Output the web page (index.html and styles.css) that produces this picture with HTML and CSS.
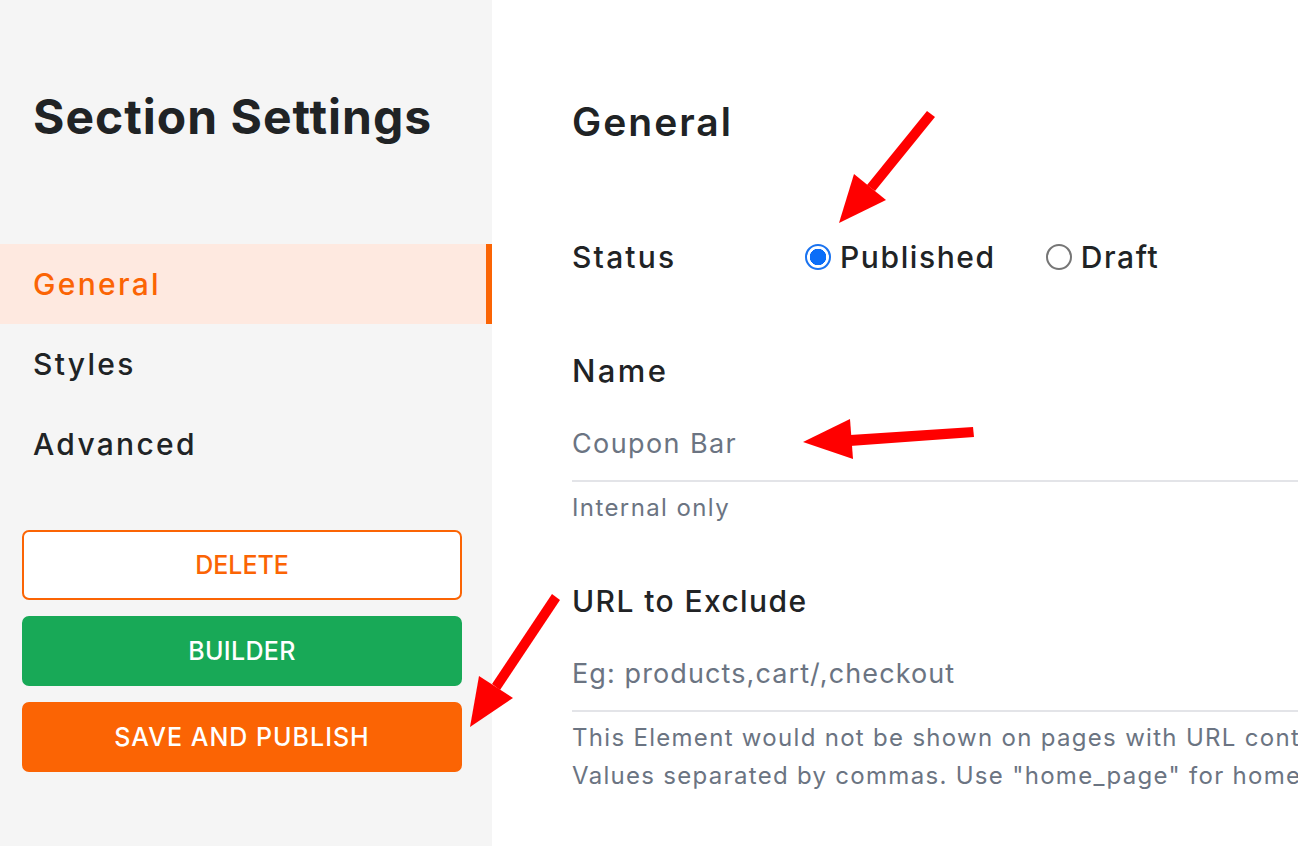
FILE: index.html
```html
<!DOCTYPE html>
<html>
<head>
<meta charset="utf-8">
<link rel="stylesheet" href="styles.css">
</head>
<body>
<div class="page">
  <aside class="sidebar">
    <h1 class="side-title">Section Settings</h1>
    <nav class="nav">
      <div class="nav-item active">General</div>
      <div class="nav-item">Styles</div>
      <div class="nav-item">Advanced</div>
    </nav>
    <div class="actions">
      <button class="btn btn-delete">DELETE</button>
      <button class="btn btn-builder">BUILDER</button>
      <button class="btn btn-save">SAVE AND PUBLISH</button>
    </div>
  </aside>
  <main class="main">
    <h2 class="main-title">General</h2>
    <div class="status-row">
      <div class="status-label">Status</div>
      <div class="radio-group">
        <span class="radio checked"></span><span class="radio-text published">Published</span>
        <span class="radio unchecked"></span><span class="radio-text">Draft</span>
      </div>
    </div>
    <div class="field-label name-label">Name</div>
    <div class="input value">Coupon Bar</div>
    <div class="hint">Internal only</div>
    <div class="field-label url-label">URL to Exclude</div>
    <div class="input placeholder">Eg: products,cart/,checkout</div>
    <div class="help">
      <div class="help-line">This Element would not be shown on pages with URL containing any of these values.</div>
      <div class="help-line">Values separated by commas. Use "home_page" for home page.</div>
    </div>
  </main>
  <svg class="annotations" width="1298" height="846" viewBox="0 0 1298 846">
    <polygon fill="#ff0000" points="927,111 935,117 875,191 867,185"/>
    <polygon fill="#ff0000" points="839,223 854,174 886,200"/>
    <polygon fill="#ff0000" points="850,435 973,427 974,437 850,446"/>
    <polygon fill="#ff0000" points="803,442 850,419 853,459"/>
    <polygon fill="#ff0000" points="552,594 560,600 500,690 492,684"/>
    <polygon fill="#ff0000" points="470,727 479,676 513,698"/>
  </svg>
</div>
</body>
</html>
```
FILE: styles.css
```css
html, body {
  margin: 0;
  padding: 0;
}
body {
  font-family: Inter, "Noto Sans", "Liberation Sans", sans-serif;
  color: #212325;
  background: #ffffff;
  overflow: hidden;
}
.page {
  position: relative;
  display: flex;
  width: 1298px;
  height: 846px;
  overflow: hidden;
}
.sidebar {
  flex: 0 0 492px;
  width: 492px;
  height: 846px;
  background: #f5f5f5;
  display: flex;
  flex-direction: column;
}
.side-title {
  margin: 0;
  padding: 88px 0 0 33px;
  font-size: 48px;
  line-height: 58px;
  font-weight: 700;
  letter-spacing: 1px;
  color: #202325;
  white-space: nowrap;
}
.nav {
  margin-top: 98px;
  display: flex;
  flex-direction: column;
}
.nav-item {
  height: 80px;
  line-height: 80px;
  padding-left: 33px;
  font-size: 30px;
  font-weight: 500;
  letter-spacing: 2.3px;
  color: #202325;
}
.nav-item.active {
  background: #fee9e0;
  color: #fb6404;
  border-right: 6px solid #fb6404;
}
.actions {
  margin-top: 46px;
  padding: 0 30px 0 22px;
  display: flex;
  flex-direction: column;
  gap: 16px;
}
.btn {
  display: block;
  width: 440px;
  height: 70px;
  border-radius: 7px;
  border: 2px solid transparent;
  font-family: inherit;
  font-size: 25px;
  font-weight: 500;
  letter-spacing: 0.3px;
  cursor: pointer;
}
.btn-delete {
  background: #ffffff;
  border-color: #fb6404;
  color: #fb6404;
  letter-spacing: 0;
}
.btn-builder {
  background: #18a957;
  border-color: #18a957;
  color: #ffffff;
}
.btn-save {
  background: #fb6404;
  border-color: #fb6404;
  color: #ffffff;
  letter-spacing: 1px;
}
.main {
  flex: 1 1 auto;
  min-width: 0;
  padding: 98px 0 0 80px;
  overflow: hidden;
}
.main-title {
  margin: 0;
  font-size: 39px;
  line-height: 48px;
  font-weight: 600;
  letter-spacing: 2px;
  color: #202325;
}
.status-row {
  margin-top: 87px;
  height: 48px;
  display: flex;
  align-items: center;
}
.status-label {
  width: 233px;
  font-size: 30px;
  font-weight: 500;
  letter-spacing: 2.2px;
}
.radio-group {
  display: flex;
  align-items: center;
}
.radio {
  display: inline-block;
  box-sizing: border-box;
  width: 26px;
  height: 26px;
  border-radius: 50%;
  margin-right: 9px;
}
.radio.checked {
  border: 2px solid #1a73f0;
  background: radial-gradient(circle, #0b6ef8 0 8px, #ffffff 8.5px);
}
.radio.unchecked {
  border: 2px solid #767676;
  background: #ffffff;
}
.radio-text {
  font-size: 30px;
  font-weight: 500;
  letter-spacing: 1.6px;
  color: #202325;
}
.radio-text.published {
  margin-right: 50px;
}
.field-label {
  font-size: 30px;
  line-height: 40px;
  font-weight: 500;
  letter-spacing: 1.4px;
  white-space: nowrap;
}
.name-label {
  margin-top: 70px;
  font-size: 31px;
  letter-spacing: 2.4px;
}
.url-label {
  margin-top: 57px;
}
.input {
  margin-top: 19px;
  padding: 14px 0 16px;
  line-height: 40px;
  font-size: 27px;
  letter-spacing: 1.4px;
  color: #6b7482;
  border-bottom: 2px solid #e3e4e8;
  white-space: nowrap;
}
.input.placeholder {
  letter-spacing: 1.1px;
}
.hint {
  margin-top: 10px;
  font-size: 24px;
  line-height: 32px;
  letter-spacing: 1.4px;
  color: #6b7482;
}
.help {
  margin-top: 7px;
}
.help-line {
  font-size: 24px;
  line-height: 38px;
  letter-spacing: 1.3px;
  color: #6b7482;
  white-space: nowrap;
}
.annotations {
  position: absolute;
  left: 0;
  top: 0;
  pointer-events: none;
}
```
